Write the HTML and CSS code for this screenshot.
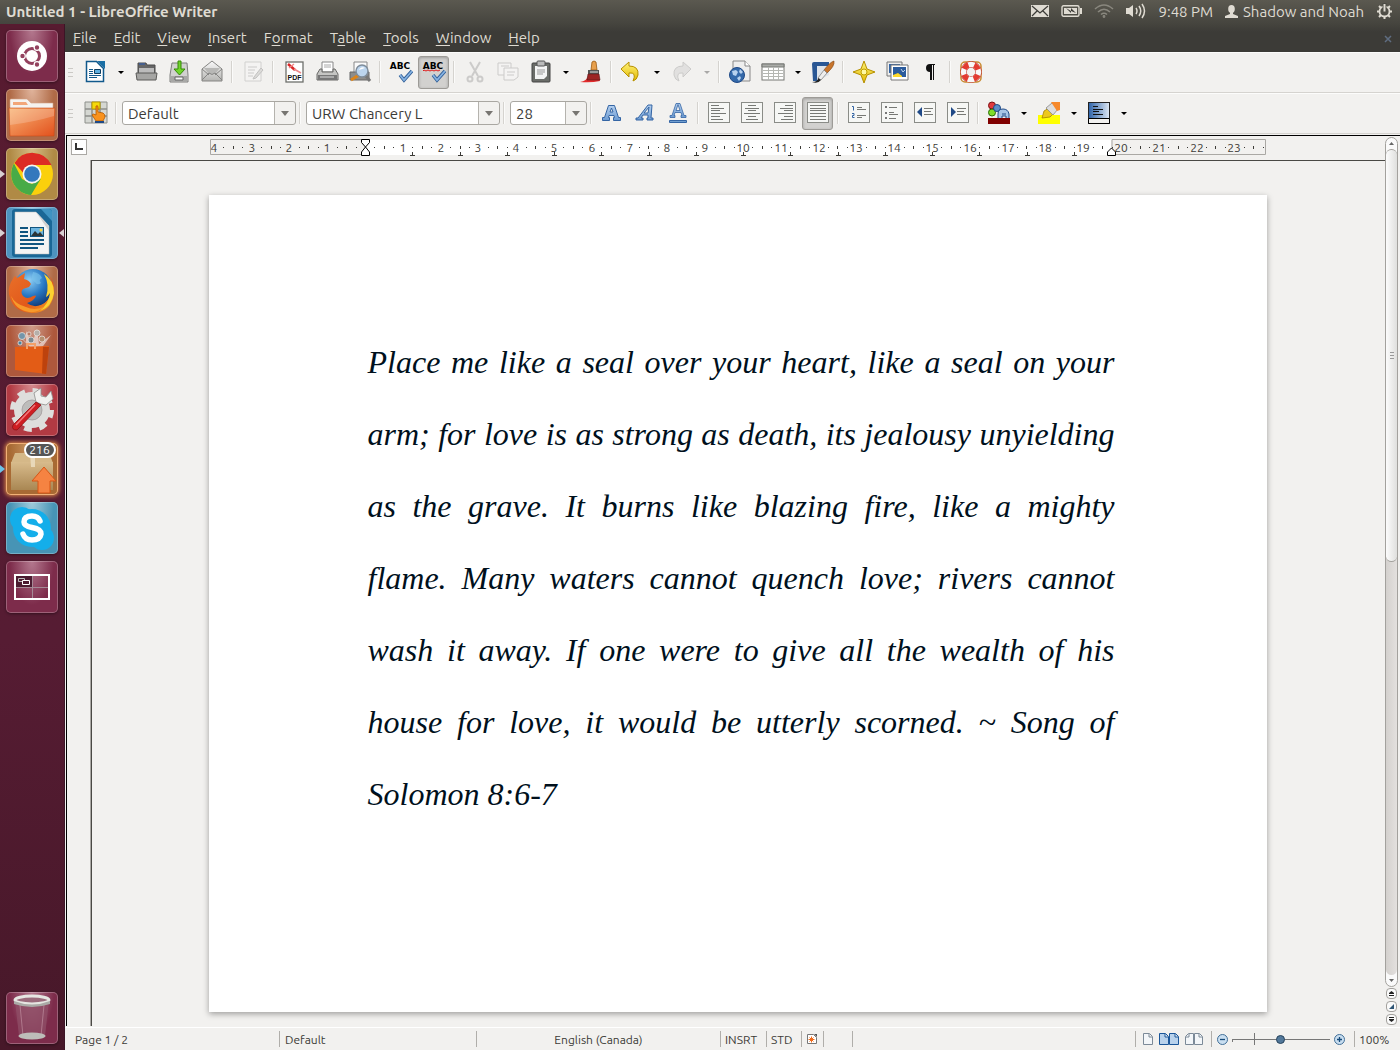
FILE: index.html
```
<!DOCTYPE html>
<html lang="en">
<head>
    <meta charset="UTF-8">
    <meta name="viewport" content="width=device-width, initial-scale=1.0">
    <title>Untitled 1 - LibreOffice Writer</title>
    <link rel="stylesheet" href="styles.css">
</head>
<body>
    <!-- shared gradients -->
    <svg class="defs" width="0" height="0" aria-hidden="true">
        <defs>
            <linearGradient id="blue" x1="0" y1="0" x2="0" y2="1"><stop offset="0" stop-color="#b4cfee"/><stop offset="1" stop-color="#6c9bd2"/></linearGradient>
            <linearGradient id="grey" x1="0" y1="0" x2="0" y2="1"><stop offset="0" stop-color="#fafafa"/><stop offset="1" stop-color="#b5b5b2"/></linearGradient>
            <linearGradient id="yellow" x1="0" y1="0" x2="0" y2="1"><stop offset="0" stop-color="#fff27a"/><stop offset="1" stop-color="#e2b900"/></linearGradient>
            <linearGradient id="orange" x1="0" y1="0" x2="1" y2="1"><stop offset="0" stop-color="#f9b475"/><stop offset="1" stop-color="#e2501c"/></linearGradient>
            <linearGradient id="fox" x1="0" y1="0" x2="1" y2="1"><stop offset="0" stop-color="#e9702a"/><stop offset=".6" stop-color="#e2591a"/><stop offset="1" stop-color="#f7a823"/></linearGradient>
            <linearGradient id="navy" x1="0" y1="0" x2="1" y2="0"><stop offset="0" stop-color="#2d62a8"/><stop offset="1" stop-color="#dfe9f5"/></linearGradient>
            <linearGradient id="box" x1="0" y1="0" x2="0" y2="1"><stop offset="0" stop-color="#d8bb8c"/><stop offset="1" stop-color="#a98753"/></linearGradient>
            <radialGradient id="globe" cx=".4" cy=".3" r=".8"><stop offset="0" stop-color="#8fd0f5"/><stop offset=".5" stop-color="#2878c4"/><stop offset="1" stop-color="#0c2c66"/></radialGradient>
        </defs>
    </svg>

    <header class="panel">
        <h1 class="panel-title">Untitled 1 - LibreOffice Writer</h1>
        <div class="indicators">
            <button class="ind" aria-label="Messages"><svg width="18" height="12" viewBox="0 0 18 12"><rect width="18" height="12" fill="#dfdbd2"/><path d="M1 1l8 7 8-7M1 11l5-5M17 11l-5-5" fill="none" stroke="#3c3b37" stroke-width="1.2"/></svg></button>
            <button class="ind" aria-label="Battery"><svg width="21" height="12" viewBox="0 0 21 12"><rect x="1" y=".8" width="17" height="10.4" rx="1.5" fill="none" stroke="#dfdbd2" stroke-width="1.4"/><rect x="3" y="3" width="13" height="6" fill="#dfdbd2"/><path d="M19 3h2v6h-2z" fill="#dfdbd2"/><path d="M5 3l5 3 0-3 5 5-5-2v2z" fill="#3c3b37"/></svg></button>
            <button class="ind" aria-label="Network"><svg width="20" height="14" viewBox="0 0 20 14" fill="none" stroke="#8a887f" stroke-width="1.6"><path d="M1 5Q10-3 19 5M4 8Q10 2.500 16 8M7 10.500Q10 8 13 10.500"/><circle cx="10" cy="12.500" r=".6"/></svg></button>
            <button class="ind" aria-label="Sound"><svg width="20" height="16" viewBox="0 0 20 16"><path d="M0 5h3l4-3v12l-4-3H0z" fill="#dfdbd2"/><path d="M10 5q2 3 0 6M13 3q3.500 5 0 10M16 1q5 7 0 14" fill="none" stroke="#dfdbd2" stroke-width="1.5"/></svg></button>
            <button class="ind clock">9:48 PM</button>
            <button class="ind user"><svg width="13" height="13" viewBox="0 0 13 13" fill="#dfdbd2"><ellipse cx="6.500" cy="4" rx="3.300" ry="4"/><path d="M5 7h3v2l5 2v2H0v-2l5-2z"/></svg>Shadow and Noah</button>
            <button class="ind" aria-label="Session"><svg width="17" height="17" viewBox="0 0 17 17"><circle cx="8.500" cy="8.500" r="5" fill="none" stroke="#dfdbd2" stroke-width="1.8"/><g stroke="#dfdbd2" stroke-width="2"><path d="M1 8.500h2M14 8.500h2M8.500 14v2M3 3l2 2M14 3l-2 2M3 14l2-2M14 14l-2-2"/></g><path d="M6.500 0h4v8h-4z" fill="#4b4a43"/><path d="M8.500 1v7.500" stroke="#dfdbd2" stroke-width="2"/></svg></button>
        </div>
    </header>

    <div class="desktop">
        <nav class="launcher" aria-label="Launcher">
            <button class="tile plum" aria-label="Dash"><svg viewBox="0 0 52 52"><circle cx="26" cy="26" r="15" fill="#fff"/><circle cx="26" cy="26" r="7.500" fill="none" stroke="#93415e" stroke-width="3"/><g fill="#93415e" stroke="#fff" stroke-width="1.200"><circle cx="16.500" cy="26" r="2.800"/><circle cx="31" cy="17.500" r="2.800"/><circle cx="31" cy="34.500" r="2.800"/></g></svg></button>
            <button class="tile copper" aria-label="Files"><svg viewBox="0 0 52 52"><path d="M4 11q0-1 1-1h16l4 4h22v8H4z" fill="#f5f2ef" stroke="#d4a184" stroke-width=".6"/><path d="M7 13h13l2 3H7z" fill="#f2a679"/><path d="M3 19h46l-1 28H4z" fill="url(#orange)" stroke="#c94a17" stroke-width=".6"/><path d="M4 20h44v7Q28 33 4 36z" fill="#fff" opacity=".2"/></svg></button>
            <button class="tile gold run" aria-label="Chrome"><svg viewBox="0 0 52 52"><circle cx="26" cy="26" r="21" fill="#fbd00c"/><path d="M8 15.500A21 21 0 0 0 25 47L35 30.500 26 36 16 31z" fill="#48ab47"/><path d="M8.500 15A21 21 0 0 1 45.500 17H26q-7 0-9 7.500z" fill="#dc2b24"/><circle cx="26" cy="26" r="9.500" fill="#f5f5f5"/><circle cx="26" cy="26" r="7.800" fill="#3478bd"/></svg></button>
            <button class="tile sky run focus" aria-label="LibreOffice Writer"><svg viewBox="0 0 52 52"><rect x="6" y="2" width="40" height="48" rx="3" fill="#1a6796"/><path d="M35 2h8q3 0 3 3v9z" fill="#3f93c2"/><path d="M9 5h21l13 14v28H9z" fill="#f4f4f4" stroke="#bbb" stroke-width=".5"/><path d="M30 5l13 14v5z" fill="#d0d0d0"/><path d="M14 21h8M14 25h8M14 29h8M14 33h24M14 37h24M14 41h18" stroke="#115580" stroke-width="2"/><rect x="24.500" y="20.500" width="13" height="9" fill="#6db5e0" stroke="#115580"/><path d="M25 29l4-5 3 3 2-2 3.500 4z" fill="#2c3436"/><circle cx="35" cy="23" r="1.500" fill="#ffd23c"/></svg></button>
            <button class="tile copper" aria-label="Firefox"><svg viewBox="0 0 52 52"><circle cx="27" cy="22" r="19" fill="url(#globe)"/><path d="M27 6q7 1 9 6-4 2-1 5-4 3-6-1-5-2-2-10z" fill="#7cc4ec" opacity=".6"/><path d="M5 16l3-5 1-1 2 2 8-5-1 6q5 1 7 5l-2 3-6 2q-3 3 0 7 4 4 10 0 3-1 3 0-2 5-9 7 6 5 14 2 9-4 10-14 3-11-3-17 7 7 6 20-3 19-22 19Q8 46 4 32q-3-8 1-16z" fill="url(#fox)"/><path d="M38 8q10 6 10 19-2 14-14 18 9-8 10-18-2 3-4 4 4-12-2-23z" fill="#fbd131"/><path d="M5 30q4 14 18 16 9 1 15-5-10 4-18 0-11-3-15-11z" fill="#f79a2b"/></svg></button>
            <button class="tile rust" aria-label="Software Center"><svg viewBox="0 0 52 52"><path d="M26 24L10 8l10 9 0-11 6 13 5-15 2 15 12-9-10 14z" fill="#fff" opacity=".55"/><g stroke="#e7e0db" stroke-width=".8"><circle cx="16" cy="11" r="3.500" fill="#7395aa"/><circle cx="31" cy="8" r="3" fill="#b5b0aa"/><circle cx="36" cy="14" r="3" fill="#b58f70"/><circle cx="25" cy="15" r="3" fill="#7b8a90"/><circle cx="14" cy="18" r="2" fill="#4684a0"/><circle cx="23" cy="9" r="2" fill="#b97c65"/></g><path d="M9 22l34-1-3 28-31-4z" fill="#e35c16"/><path d="M37 22h6l-3 27-4-.500z" fill="#bd420d"/><path d="M21 24v-5h8v5" fill="none" stroke="#f3a067" stroke-width="2"/></svg></button>
            <button class="tile red" aria-label="System Settings"><svg viewBox="0 0 52 52"><circle cx="26" cy="26" r="19" fill="none" stroke="#dededc" stroke-width="6" stroke-dasharray="7.500 7.420"/><circle cx="26" cy="26" r="14" fill="none" stroke="#dededc" stroke-width="8"/><circle cx="26" cy="26" r="10" fill="#bdbdbb" stroke="#aaa"/><path d="M30 18l-2-9 7-5 0 8 5 1 5-6 2 8-7 6-5-1z" fill="#f0f0ee" stroke="#8e8e8c" stroke-width=".8"/><path d="M30 18L7 41q-2 5 4 5L35 21z" fill="#cf1e22" stroke="#8b1014" stroke-width=".8"/><path d="M29 21L10 41" stroke="#f0787a" stroke-width="1.500"/></svg></button>
            <button class="tile amber run update" aria-label="Update Manager"><svg viewBox="0 0 52 52"><path d="M9 10h34l4 10H5z" fill="#d5b888"/><path d="M5 19h42v28H5z" fill="url(#box)"/><path d="M24 10h5v14h-4z" fill="#e8d8b9"/><path d="M32 50V38h-6l12-14 12 14h-6v12z" fill="#f58342" stroke="#d75515"/></svg><span class="badge">216</span></button>
            <button class="tile cyan" aria-label="Skype"><svg viewBox="0 0 52 52"><g fill="#14aeea"><circle cx="26" cy="26" r="19"/><circle cx="16" cy="17" r="12"/><circle cx="36" cy="36" r="12"/></g><path d="M34 19q-2-5-8-5-8 0-8 6 0 4 8 5.500 9 1.500 9 6.500-1 6-9 6-7 0-9-6" fill="none" stroke="#fff" stroke-width="5.500" stroke-linecap="round"/></svg></button>
            <button class="tile plum" aria-label="Workspaces"><svg viewBox="0 0 52 52"><path d="M26.500 14v24M9 26.500h34" stroke="#a58a96"/><rect x="9" y="14" width="34" height="24" fill="none" stroke="#fff" stroke-width="2"/><path d="M10 15h16v11H10z" fill="#4c1c31"/><path d="M12.500 17.500h6v3h-6z" fill="none" stroke="#bbb"/><path d="M16.500 19.500h7v4h-7z" fill="#4c1c31" stroke="#fff"/></svg></button>
            <button class="tile plum trash" aria-label="Trash"><svg viewBox="0 0 52 52"><path d="M9 9l4 35q13 6 26 0l4-35z" fill="#8f4f67" opacity=".75"/><path d="M14 13l3 31M38 13l-3 31" stroke="#d2a7b5" opacity=".5"/><ellipse cx="26" cy="44" rx="13.500" ry="3.500" fill="#bdbdb9"/><ellipse cx="26" cy="8" rx="17" ry="4" fill="#9b6b7c" stroke="#e6e6e2" stroke-width="3"/><path d="M8 9q18 7 36 0v3q-18 6-36 0z" fill="#aaaaa6"/></svg></button>
        </nav>

        <main class="window">
            <nav class="menubar" aria-label="Menu">
                <button><u>F</u>ile</button>
                <button><u>E</u>dit</button>
                <button><u>V</u>iew</button>
                <button><u>I</u>nsert</button>
                <button>F<u>o</u>rmat</button>
                <button>T<u>a</u>ble</button>
                <button><u>T</u>ools</button>
                <button><u>W</u>indow</button>
                <button><u>H</u>elp</button>
                <button class="close-doc" aria-label="Close document"><svg width="8" height="8" viewBox="0 0 8 8"><path d="M1 1l6 6M7 1L1 7" stroke="#5f6d81" stroke-width="1.500"/></svg></button>
            </nav>

            <div class="toolbar" role="toolbar" aria-label="Standard">
                <span class="grip"></span>
                <button class="tool" aria-label="New"><svg viewBox="0 0 24 24"><path d="M2.500 1.500h10l7 7v13h-17z" fill="#fff" stroke="#11598c" stroke-width="1.500"/><path d="M13 1h8v8z" fill="#1a6fa5"/><path d="M5 9.500h4M5 11.500h4M5 13.500h4M5 15.500h12M5 17.500h8" stroke="#11598c"/><path d="M10.500 9.500h6v4h-6z" fill="#5fb0e0" stroke="#0c3c60"/></svg></button>
                <button class="drop" aria-label="New menu"></button>
                <button class="tool" aria-label="Open"><svg viewBox="0 0 24 24"><path d="M4 3h8l1 2h8v9H4z" fill="#666" stroke="#4a4a4a"/><path d="M5 4h6" stroke="#465f8d" stroke-width="2"/><path d="M5 8h15v5H5z" fill="#bbb"/><path d="M2 13h21l-1 7H3z" fill="#a5a5a3" stroke="#5b5b59"/></svg></button>
                <button class="tool" aria-label="Save"><svg viewBox="0 0 24 24"><path d="M5 3h15l1 12v7H3v-7z" fill="#d1d1cf" stroke="#7e7e7c"/><path d="M4 16h16v5H4z" fill="#a8a8a6"/><path d="M8 17h8v3H8z" fill="#f7f7f7" stroke="#666"/><path d="M11 1h3v8h4l-5.500 6L7 9h4z" fill="#70d52c" stroke="#348a05"/></svg></button>
                <button class="tool" aria-label="E-mail"><svg viewBox="0 0 24 24"><path d="M2 9l10-8 10 8v12H2z" fill="url(#grey)" stroke="#858583"/><path d="M4 8h16l-5 6H9z" fill="#b8b8b6"/><path d="M2 20l7-7q3 3 6 0l7 7M2 9l7 6M22 9l-7 6" fill="none" stroke="#858583"/></svg></button>
                <span class="sep"></span>
                <button class="tool off" aria-label="Edit file" disabled><svg viewBox="0 0 24 24"><path d="M4 2h16v19H4z" fill="#fafafa" stroke="#888"/><path d="M7 7h9M7 10h7M7 13h6M7 16h5" stroke="#777"/><path d="M13 17l7-9 2 2-7 8-3 1z" fill="#aaa" stroke="#555"/></svg></button>
                <span class="sep"></span>
                <button class="tool" aria-label="Export as PDF"><svg viewBox="0 0 24 24"><rect x="4" y="2" width="17" height="20" fill="#fff" stroke="#6e706c" stroke-width="1.300"/><path d="M6 4l7 6" stroke="#da2525" stroke-width="2.500"/><path d="M7 8l5-4M12 9l7 4" fill="none" stroke="#e88" stroke-width="1.500"/><text x="12.500" y="20" text-anchor="middle" class="pdf-text">PDF</text></svg></button>
                <button class="tool" aria-label="Print"><svg viewBox="0 0 24 24"><path d="M7 2h11v10H7z" fill="#fff" stroke="#888"/><path d="M9 5h7M9 7h7" stroke="#aaa"/><path d="M5 9h2v3h11V9h2l3 5v6H2v-6z" fill="#c5c5c3" stroke="#686866"/><path d="M3 15h19v5H3z" fill="#777"/><path d="M5 17h14" stroke="#ddd"/></svg></button>
                <button class="tool" aria-label="Page preview"><svg viewBox="0 0 24 24"><path d="M6 2h13v11H6z" fill="#fafafa" stroke="#888"/><path d="M2 12h19v8H2z" fill="#8d8d8b" stroke="#666"/><path d="M3 20l8-5" stroke="#dd8418" stroke-width="3"/><path d="M18 16l4 5" stroke="#777" stroke-width="3"/><circle cx="14" cy="11" r="6" fill="#bcd5ee" stroke="#7f8d9b" stroke-width="1.500"/><path d="M11 10a4 4 0 0 1 6-2z" fill="#fff"/></svg></button>
                <span class="sep"></span>
                <button class="tool" aria-label="Spelling and grammar"><svg viewBox="0 0 24 24"><text x="11" y="9" text-anchor="middle" class="abc-text">ABC</text><path d="M11 15l4 5 8-9" fill="none" stroke="#315f98" stroke-width="3.500"/><path d="M11 15l4 5 8-9" fill="none" stroke="#86b3e2" stroke-width="1.800"/></svg></button>
                <button class="tool pressed" aria-label="Autospellcheck" aria-pressed="true"><svg viewBox="0 0 24 24"><text x="11" y="9" text-anchor="middle" class="abc-text">ABC</text><path d="M1 11l1-1 2 1 2-1 2 1 2-1 2 1 2-1 2 1 2-1" fill="none" stroke="#e01b1b"/><path d="M11 15l4 5 8-9" fill="none" stroke="#315f98" stroke-width="3.500"/><path d="M11 15l4 5 8-9" fill="none" stroke="#86b3e2" stroke-width="1.800"/></svg></button>
                <span class="sep"></span>
                <button class="tool off" aria-label="Cut" disabled><svg viewBox="0 0 24 24" fill="none" stroke="#777" stroke-width="2"><path d="M7 2l8 14M17 2L9 16"/><circle cx="7" cy="19" r="2.500"/><circle cx="17" cy="19" r="2.500"/></svg></button>
                <button class="tool off" aria-label="Copy" disabled><svg viewBox="0 0 24 24" fill="#fafafa" stroke="#777"><path d="M2 3h13v12H2z"/><path d="M8 8h14v9l-4 3H8z"/><path d="M5 6h8M11 12h8M11 15h7"/></svg></button>
                <button class="tool" aria-label="Paste"><svg viewBox="0 0 24 24"><rect x="3" y="3" width="18" height="19" rx="1" fill="#6b6d69" stroke="#444"/><path d="M6 6h12v10l-3 3H6z" fill="#f4f4f4"/><path d="M8 10h8M8 12h8M8 14h6" stroke="#999"/><rect x="8" y="1" width="8" height="5" rx="1" fill="#bbb" stroke="#555"/></svg></button>
                <button class="drop" aria-label="Paste menu"></button>
                <button class="tool" aria-label="Clone formatting"><svg viewBox="0 0 24 24"><path d="M1 22q7-1 8-6h10l2 5q-9 2-20 1z" fill="#e22b2b"/><path d="M13 2q2-2 4 0l1 8h-6z" fill="#e8a04c" stroke="#9a5b12" stroke-width=".8"/><path d="M9 10h11v4H9z" fill="#555"/><path d="M9 14h11l1 6H8z" fill="#9c2424" stroke="#571717" stroke-width=".6"/><path d="M11 12h8" stroke="#ddd"/></svg></button>
                <span class="sep"></span>
                <button class="tool" aria-label="Undo"><svg viewBox="0 0 24 24"><path d="M1 9l8-7v4q10 0 9 9-1 5-5 6 4-9-4-8v4z" fill="url(#yellow)" stroke="#b69000"/></svg></button>
                <button class="drop" aria-label="Undo menu"></button>
                <button class="tool off" aria-label="Redo" disabled><svg viewBox="0 0 24 24"><path d="M21 9l-8-7v4Q3 6 4 15q1 5 5 6-4-9 4-8v4z" fill="#bbb" stroke="#777"/></svg></button>
                <button class="drop off" aria-label="Redo menu" disabled></button>
                <span class="sep"></span>
                <button class="tool" aria-label="Hyperlink"><svg viewBox="0 0 24 24"><path d="M5 1h12l5 5v15H5z" fill="#eee" stroke="#888"/><path d="M17 1v5h5" fill="#fff" stroke="#888"/><circle cx="9" cy="15" r="7.500" fill="#3469aa" stroke="#204a87"/><path d="M4 11l4-1 2 2-2 4-3-1zM12 9l3 3-2 2-2-2zM9 18l3-2 1 2-2 3z" fill="#b7d1ee"/></svg></button>
                <button class="tool" aria-label="Table"><svg viewBox="0 0 24 24"><rect x="1" y="4" width="22" height="16" fill="#fff" stroke="#777975"/><path d="M1 4h22v3H1z" fill="#aaaca8" stroke="#777975"/><path d="M2 10.500h20M2 13.500h20M2 16.500h20M7.500 7v13M12.500 7v13M17.500 7v13" stroke="#b5b7b2"/></svg></button>
                <button class="drop" aria-label="Table menu"></button>
                <button class="tool" aria-label="Show draw functions"><svg viewBox="0 0 24 24"><path d="M1 4q0-2 2-2h15v4L8 17v4H2z" fill="#2a5794"/><path d="M6 6h12v9L8 20H6z" fill="#dfe4ea"/><path d="M23 1q1 5-7 12l-3-3q6-8 10-9z" fill="#c8752c" stroke="#80410e" stroke-width=".6"/><path d="M13 10l3 3-6 7-3-2z" fill="#eee" stroke="#777" stroke-width=".7"/><path d="M1 22q6 0 6-4l3 2q-3 4-9 2z" fill="#222"/></svg></button>
                <span class="sep"></span>
                <button class="tool" aria-label="Navigator"><svg viewBox="0 0 24 24"><path d="M12 1l3 8 8 3-8 3-3 8-3-8-8-3 8-3z" fill="url(#yellow)" stroke="#b69000"/><circle cx="12" cy="12" r="3" fill="#fff8a5" stroke="#c0a000"/></svg></button>
                <button class="tool" aria-label="Gallery"><svg viewBox="0 0 24 24"><path d="M2 2h15v14H2z" fill="#eee" stroke="#777"/><path d="M4 4h11v9H4z" fill="#3465a4"/><path d="M6 5h17v15H6z" fill="#fff" stroke="#777"/><path d="M8 7h13v10H8z" fill="#2b5b9c"/><path d="M8 15l5-2 4 3v1H8z" fill="#ffd92a"/><path d="M16 9l2 3 2-2" fill="none" stroke="#bcd1eb"/></svg></button>
                <button class="tool" aria-label="Nonprinting characters"><svg viewBox="0 0 24 24"><path d="M17 4h-5q-4 0-4 4t4 4v8h2V5h1v15h1V5h1z" fill="#111"/></svg></button>
                <span class="sep"></span>
                <button class="tool" aria-label="Help"><svg viewBox="0 0 24 24"><rect x="2" y="2" width="20" height="20" rx="4" fill="none" stroke="#c98b31" stroke-width="1.500"/><circle cx="12" cy="12" r="7.500" fill="none" stroke="#bb2a20" stroke-width="6.500"/><circle cx="12" cy="12" r="7.500" fill="none" stroke="#f8f8f8" stroke-width="5.500"/><circle cx="12" cy="12" r="7.500" fill="none" stroke="#e33b31" stroke-width="5.500" stroke-dasharray="5.900 5.900" stroke-dashoffset="-3"/></svg></button>
            </div>

            <div class="toolbar" role="toolbar" aria-label="Formatting">
                <span class="grip"></span>
                <button class="tool" aria-label="Styles and formatting"><svg viewBox="0 0 24 24"><path d="M1 1h22v21H1z" fill="#d5d7d2" stroke="#8d8f8a"/><path d="M1 8h22M1 15h22M8 1v21M16 1v21" stroke="#8d8f8a" stroke-width="1.500"/><path d="M8 1h8v7H8z" fill="#f5d90a" stroke="#b89b00"/><path d="M12 5q2-1 2 1v5l5 1q2 1 2 4l-2 4h-7l-4-6q1-2 4 0z" fill="#f9921e" stroke="#b25800" stroke-width=".8"/><path d="M11 20h9v2h-9z" fill="#204a87"/></svg></button>
                <span class="sep"></span>
                <div class="combo style-combo"><select aria-label="Paragraph style"><option>Default</option></select></div>
                <span class="sep"></span>
                <div class="combo font-combo"><select aria-label="Font name"><option>URW Chancery L</option></select></div>
                <span class="sep"></span>
                <div class="combo size-combo"><select aria-label="Font size"><option>28</option></select></div>
                <span class="sep"></span>
                <button class="tool" aria-label="Bold"><svg viewBox="0 0 24 24"><path d="M2.500 19.500v-3h2l4-12h6l4 12h2v3h-7v-3h1l-.5-2H9l-.5 2h1v3zM10 11h3l-1.500-4z" fill="url(#blue)" stroke="#3465a4" fill-rule="evenodd"/></svg></button>
                <button class="tool" aria-label="Italic"><svg viewBox="0 0 24 24"><path d="M3 19v-2h2L15 4h4l-1 13h2v2h-6v-2h1v-3H10l-2 3h2v2zM11 12h4l1-6z" fill="url(#blue)" stroke="#3465a4" fill-rule="evenodd"/></svg></button>
                <button class="tool" aria-label="Underline"><svg viewBox="0 0 24 24"><path d="M4 16.500v-2h2l4-12h4l4 12h2v2h-5v-2h1l-1-3H9l-1 3h1v2zM10 9.500h4l-2-6z" fill="url(#blue)" stroke="#3465a4" stroke-width=".8" fill-rule="evenodd"/><path d="M3.500 19.500h17v2h-17z" fill="#729fcf" stroke="#3465a4"/></svg></button>
                <span class="sep"></span>
                <button class="tool" aria-label="Align left"><svg viewBox="0 0 24 24"><rect class="sheet" x="1.500" y="1.500" width="21" height="20"/><path class="lines" d="M4 4.500h8M4 7.500h13M4 9.500h9M4 12.500h15M4 15.500h9M4 18.500h12"/></svg></button>
                <button class="tool" aria-label="Centre"><svg viewBox="0 0 24 24"><rect class="sheet" x="1.500" y="1.500" width="21" height="20"/><path class="lines" d="M8 4.500h8M5 7.500h14M8 9.500h8M4 12.500h16M8 15.500h8M6 18.500h12"/></svg></button>
                <button class="tool" aria-label="Align right"><svg viewBox="0 0 24 24"><rect class="sheet" x="1.500" y="1.500" width="21" height="20"/><path class="lines" d="M12 4.500h8M7 7.500h13M11 9.500h9M5 12.500h15M11 15.500h9M8 18.500h12"/></svg></button>
                <button class="tool pressed" aria-label="Justified" aria-pressed="true"><svg viewBox="0 0 24 24"><rect class="sheet" x="1.500" y="1.500" width="21" height="20"/><path class="lines" d="M4 4.500h16M4 7.500h16M4 9.500h16M4 12.500h16M4 15.500h16M4 18.500h16"/></svg></button>
                <span class="sep"></span>
                <button class="tool" aria-label="Numbering"><svg viewBox="0 0 24 24"><rect class="sheet" x="1.500" y="1.500" width="21" height="20"/><path class="lines" d="M10 6.500h5M10 8.500h9M10 14.500h9M10 16.500h5"/><path d="M5 5.500h1.500v4M5 12.500h2v2h-1.500v2h2" fill="none" stroke="#3465a4"/></svg></button>
                <button class="tool" aria-label="Bullets"><svg viewBox="0 0 24 24"><rect class="sheet" x="1.500" y="1.500" width="21" height="20"/><path class="lines" d="M9 6.500h8M9 11.500h5M9 13.500h9M9 17.500h7"/><path d="M5 5h2v2H5zM5 11h2v2H5zM5 16h2v2H5z" fill="#777"/></svg></button>
                <button class="tool" aria-label="Decrease indent"><svg viewBox="0 0 24 24"><rect class="sheet" x="1.500" y="1.500" width="21" height="20"/><path class="lines" d="M11 7.500h9M11 10.500h7M11 13.500h9"/><path d="M9 6v10l-5-5z" fill="#204a87"/></svg></button>
                <button class="tool" aria-label="Increase indent"><svg viewBox="0 0 24 24"><rect class="sheet" x="1.500" y="1.500" width="21" height="20"/><path class="lines" d="M11 7.500h9M11 10.500h7M11 13.500h9"/><path d="M5 6v10l5-5z" fill="#204a87"/></svg></button>
                <span class="sep"></span>
                <button class="tool" aria-label="Font colour"><svg viewBox="0 0 24 24"><circle cx="5" cy="4.500" r="3.500" fill="#e03a3e" stroke="#7c1013"/><circle cx="5" cy="11.500" r="3.500" fill="#7fdc2a" stroke="#2b6c08"/><circle cx="10" cy="7" r="3.500" fill="#5c8fc8" stroke="#204a87"/><path d="M11 18v-5q0-5 5-5t6 5v5h-3v-3h-4v3z" fill="#a7c4e6" stroke="#204a87"/><path d="M15 13h4" stroke="#204a87"/><path d="M1 17h22v6H1z" fill="#800000"/></svg></button>
                <button class="drop" aria-label="Font colour menu"></button>
                <button class="tool" aria-label="Highlighting"><svg viewBox="0 0 24 24"><path d="M1 14h22v9H1z" fill="#ff0"/><path d="M5 17l2-7 5-3 5 5-4 4z" fill="#edc81b" stroke="#a78100" stroke-width=".8"/><path d="M9 7l6-5 6 6-5 6z" fill="#ddd" stroke="#888" stroke-width=".8"/><path d="M14 1h9v8l-3 1z" fill="#f6892c"/></svg></button>
                <button class="drop" aria-label="Highlighting menu"></button>
                <button class="tool" aria-label="Background colour"><svg viewBox="0 0 24 24"><rect x="1.500" y="1.500" width="21" height="21" fill="url(#navy)" stroke="#222"/><path d="M6 5.500h5M6 8.500h10M6 10.500h6M6 13.500h10" stroke="#111"/><path d="M1.500 17.500h21v5h-21z" fill="#f2f1ef" stroke="#000"/></svg></button>
                <button class="drop" aria-label="Background colour menu"></button>
            </div>

            <div class="workspace">
                <div class="editor">
                    <button class="corner" aria-label="Tab type"><svg width="8" height="8" viewBox="0 0 8 8"><path d="M1 0v6h7" fill="none" stroke="#333" stroke-width="2"/></svg></button>
                    <div class="ruler-strip">
                        <svg class="ruler" id="ruler" width="1058" height="20" viewBox="0 0 1058 20">
                            <rect x="156" y="1" width="746" height="15" fill="#fff"/>
                            <path d="M156 .500H1.500v15H156M903 .500h153.500v15H903z" fill="none" stroke="#aaa8a4"/>
                        </svg>
                    </div>
                    <div class="side-ruler"></div>
                    <div class="canvas">
                        <article class="page">
                            <p class="verse">
                                <span>Place me like a seal over your heart, like a seal on your</span>
                                <span>arm; for love is as strong as death, its jealousy unyielding</span>
                                <span>as the grave. It burns like blazing fire, like a mighty</span>
                                <span>flame. Many waters cannot quench love; rivers cannot</span>
                                <span>wash it away. If one were to give all the wealth of his</span>
                                <span>house for love, it would be utterly scorned. ~ Song of</span>
                                <span class="last">Solomon 8:6-7</span>
                            </p>
                        </article>
                    </div>
                </div>
                <div class="scroll">
                    <div class="scrollbar">
                        <button class="step" aria-label="Scroll up"><svg width="5" height="3" viewBox="0 0 5 3"><path d="M0 3l2.500-3L5 3z" fill="#666"/></svg></button>
                        <div class="trough"><div class="thumb"><i></i></div></div>
                        <button class="step" aria-label="Scroll down"><svg width="5" height="3" viewBox="0 0 5 3"><path d="M0 0h5L2.500 3z" fill="#666"/></svg></button>
                    </div>
                    <button class="mini" aria-label="Previous page"><svg width="5" height="5" viewBox="0 0 5 5"><path d="M0 2l2.500-2L5 2v1H0zM0 4h5v1H0z" fill="#222"/></svg></button>
                    <button class="mini" aria-label="Navigation"><svg width="5" height="5" viewBox="0 0 5 5"><path d="M0 5L5 0v5z" fill="#2f5575"/></svg></button>
                    <button class="mini" aria-label="Next page"><svg width="5" height="5" viewBox="0 0 5 5"><path d="M0 3l2.500 2L5 3V2H0zM0 0h5v1H0z" fill="#222"/></svg></button>
                </div>
            </div>

            <footer class="status">
                <span class="cell page-no">Page 1 / 2</span>
                <span class="cell page-style">Default</span>
                <span class="cell lang">English (Canada)</span>
                <span class="cell insert">INSRT</span>
                <span class="cell select-mode">STD</span>
                <span class="cell modified"><svg width="12" height="12" viewBox="0 0 12 12"><path d="M1.500 1.500h6l3 3v6h-9z" fill="#fff" stroke="#777"/><path d="M8 1h3v3z" fill="#555"/><path d="M5.500 3.500v6M2.500 6.500h6M3.500 4.500l4 4M7.500 4.500l-4 4" stroke="#f06a1a"/></svg></span>
                <span class="cell signature"></span>
                <span class="cell rest"></span>
                <span class="cell views">
                    <button aria-label="Single page"><svg width="10" height="12" viewBox="0 0 10 12"><path d="M.500.500h6l3 3v8h-9zM6 1v3h3" fill="#f3f6f9" stroke="#7c8a98"/></svg></button>
                    <button aria-label="Multiple pages"><svg width="20" height="12" viewBox="0 0 20 12"><path d="M.500.500h6l3 3v8h-9zM6 1v3h3M10.500.500h6l3 3v8h-9zM16 1v3h3" fill="#b9d2ec" stroke="#1b5699"/></svg></button>
                    <button aria-label="Book view"><svg width="18" height="12" viewBox="0 0 18 12"><path d="M3.500.500h5v11h-8v-8zM9.500.500h5l3 3v8h-8z" fill="#f3f6f9" stroke="#7c8a98"/><path d="M4 1v3H1M14 1v3h3" fill="none" stroke="#7c8a98"/></svg></button>
                </span>
                <span class="cell zoom">
                    <button aria-label="Zoom out"><svg width="11" height="11" viewBox="0 0 11 11"><circle cx="5.500" cy="5.500" r="5" fill="#c9def0" stroke="#426f97"/><path d="M3 5.500h5" stroke="#164a7a" stroke-width="1.300"/></svg></button>
                    <input type="range" min="0" max="100" value="49" aria-label="Zoom">
                    <button aria-label="Zoom in"><svg width="11" height="11" viewBox="0 0 11 11"><circle cx="5.500" cy="5.500" r="5" fill="#c9def0" stroke="#426f97"/><path d="M3 5.500h5M5.500 3v5" stroke="#164a7a" stroke-width="1.300"/></svg></button>
                </span>
                <span class="cell percent">100%</span>
            </footer>
        </main>
    </div>

    <script>
        // Horizontal ruler in centimetres
        const ruler = document.getElementById('ruler');
        const zero = 156;
        const end = 902;
        const cm = 37.8;

        function add(name, attrs, text) {
            const el = document.createElementNS('http://www.w3.org/2000/svg', name);
            Object.entries(attrs).forEach(([key, value]) => el.setAttribute(key, value));
            if(text) {
                el.textContent = text;
            }
            ruler.appendChild(el);
        }

        for(let n = -4; n <= 23; n++) {
            const x = zero + n * cm;
            if(n !== 0) {
                add('text', { x: Math.round(x), y: 13, class: 'ruler-num' }, String(Math.abs(n)));
            }
            add('rect', { x: Math.round(x + cm / 4), y: 8, width: 1, height: 1, class: 'tick' });
            add('rect', { x: Math.round(x + cm / 2), y: 7, width: 1, height: 3, class: 'tick' });
            add('rect', { x: Math.round(x + cm * 3 / 4), y: 8, width: 1, height: 1, class: 'tick' });
        }

        // Default tab stops, 1.25 cm apart
        for(let x = zero + cm * 1.25; x < end - 10; x += cm * 1.25) {
            const left = Math.round(x);
            add('path', { d: `M${left - 2} 16.5h5M${left + .5} 13v3`, class: 'tab-stop' });
        }

        add('path', { d: 'M152.5 .5h8v3l-4 4.5-4-4.500zM152.500 16.500h8v-3.500l-4-5-4 5z', class: 'marker' });
        add('path', { d: 'M898.5 16.500h8v-3.500l-4-4-4 4z', class: 'marker' });
    </script>
</body>
</html>
```

FILE: styles.css
```
* {
    box-sizing: border-box;
}

body {
    margin: 0;
    height: 100vh;
    display: flex;
    flex-direction: column;
    font-family: Ubuntu, 'Noto Sans', 'Open Sans', sans-serif;
    font-size: 15px;
    color: #3c3b37;
    background: #f2f1ef;
    overflow: hidden;
}

button {
    border: none;
    background: none;
    padding: 0;
    font: inherit;
    color: inherit;
    display: flex;
    align-items: center;
    justify-content: center;
}

.defs {
    position: absolute;
}

/* top panel */
.panel {
    height: 24px;
    flex: none;
    display: flex;
    align-items: center;
    justify-content: space-between;
    padding: 0 7px 2px 6px;
    background: linear-gradient(#5b5950, #45443e);
    color: #dfdbd2;
}

.panel-title {
    margin: 0;
    font-size: 15px;
    font-weight: 700;
}

.indicators {
    display: flex;
    align-items: center;
    gap: 12px;
}

.user {
    gap: 5px;
}

.desktop {
    flex: 1;
    min-height: 0;
    display: flex;
}

/* launcher */
.launcher {
    width: 65px;
    flex: none;
    display: flex;
    flex-direction: column;
    align-items: center;
    gap: 7px;
    padding: 6px 1px 6px 0;
    background: linear-gradient(#571b30, #561c33 60%, #471829);
    border-right: 1px solid #3c1526;
}

.tile {
    position: relative;
    width: 52px;
    height: 52px;
    flex: none;
    border-radius: 5px;
    box-shadow: inset 0 0 0 1px rgba(255, 255, 255, 0.25), 0 1px 3px rgba(0, 0, 0, 0.4);
}

.tile svg {
    width: 52px;
    height: 52px;
}

.plum {
    background: radial-gradient(ellipse at 50% 0, #b4798f, #7d2c4b 60%);
}

.copper {
    background: radial-gradient(ellipse at 50% 0, #e0b49c, #b06b47 60%);
}

.gold {
    background: radial-gradient(ellipse at 50% 0, #d5bd85, #b08a45 60%);
}

.sky {
    background: radial-gradient(ellipse at 50% 0, #8fc3e0, #4d93bf 60%);
}

.rust {
    background: radial-gradient(ellipse at 50% 0, #cf9c8a, #ae583c 60%);
}

.red {
    background: radial-gradient(ellipse at 50% 0, #d58a8e, #b23a43 60%);
}

.amber {
    background: radial-gradient(ellipse at 50% 0, #cc9a66, #a86a34 60%);
    box-shadow: 0 0 4px 1px #e08c48, inset 0 0 0 1px #f2b177;
}

.cyan {
    background: radial-gradient(ellipse at 50% 0, #a0cbdc, #4794b5 60%);
}

.trash {
    margin-top: auto;
}

.run::before,
.focus::after {
    content: '';
    position: absolute;
    top: 22px;
    border: 4px solid transparent;
}

.run::before {
    left: -6px;
    border-left: 5px solid #d8d0d3;
    border-right: none;
}

.update::before {
    border-left-color: #6cc3e8;
}

.focus::after {
    right: -6px;
    border-right: 5px solid #d8d0d3;
    border-left: none;
}

.badge {
    position: absolute;
    top: -1px;
    right: 2px;
    width: 32px;
    height: 16px;
    border: 2px solid #fff;
    border-radius: 8px;
    background: #555;
    color: #fff;
    font-size: 12px;
    line-height: 12px;
    text-align: center;
}

/* window */
.window {
    flex: 1;
    min-width: 0;
    display: flex;
    flex-direction: column;
}

.menubar {
    height: 28px;
    flex: none;
    display: flex;
    align-items: center;
    gap: 17px;
    padding: 0 8px 2px;
    background: linear-gradient(#45443e, #3c3b37 8px);
    color: #dfdbd2;
}

.menubar button {
    display: block;
}

.menubar u {
    text-underline-offset: 2px;
}

.menubar .close-doc {
    margin-left: auto;
}

.toolbar {
    height: 41px;
    flex: none;
    display: flex;
    align-items: center;
    background: #f2f1ef;
    border-bottom: 1px solid #d5d3cf;
    box-shadow: inset 0 1px 0 #fcfcfb;
}

.grip {
    width: 5px;
    height: 9px;
    margin: 0 6px 0 3px;
    background: repeating-linear-gradient(#cbc9c5 0 1px, transparent 1px 4px);
}

.tool {
    width: 33px;
    height: 33px;
    flex: none;
}

.tool svg {
    width: 24px;
    height: 24px;
}

.tool.pressed {
    width: 31px;
    margin: 0 1px;
    border: 1px solid #9d9b97;
    border-radius: 3px;
    background: #d2d1cf;
    box-shadow: inset 0 1px 3px rgba(0, 0, 0, 0.25);
}

.off svg,
.drop.off {
    opacity: 0.3;
}

.drop {
    width: 17px;
    height: 33px;
    flex: none;
}

.drop::before {
    content: '';
    border: 3px solid transparent;
    border-top-color: #000;
    border-bottom: none;
}

.sep {
    width: 2px;
    height: 22px;
    margin: 0 3px;
    flex: none;
    border-left: 1px solid #d5d3cf;
    border-right: 1px solid #fbfbfa;
}

.pdf-text {
    font: 700 7px 'Liberation Sans', sans-serif;
    fill: #111;
}

.abc-text {
    font: 700 9px 'DejaVu Sans', sans-serif;
    fill: #000;
}

.sheet {
    fill: #f6f7f5;
    stroke: #8a8c87;
}

.lines {
    fill: none;
    stroke: #777975;
}

.combo {
    position: relative;
    height: 24px;
    margin-left: 2px;
    flex: none;
}

.combo select {
    appearance: none;
    width: 100%;
    height: 24px;
    padding: 0 26px 0 5px;
    border: 1px solid #a9a7a2;
    border-radius: 3px;
    background: linear-gradient(90deg, #b5b3ae 1px, #f2f1ef 1px) right / 21px 100% no-repeat #fff;
    font: inherit;
    color: #3c3b37;
}

.combo::after {
    content: '';
    position: absolute;
    right: 7px;
    top: 10px;
    border: 4px solid transparent;
    border-top: 5px solid #777571;
    border-bottom: none;
    pointer-events: none;
}

.style-combo {
    width: 174px;
}

.font-combo {
    width: 194px;
}

.size-combo {
    width: 77px;
}

/* editing area */
.workspace {
    flex: 1;
    min-height: 0;
    display: flex;
    padding: 1px 0 0 1px;
    background: #f2f1ef;
    border-bottom: 1px solid #f2f1ef;
}

.editor {
    flex: 1;
    min-width: 0;
    display: grid;
    grid-template-columns: 24px 1fr;
    grid-template-rows: 24px 1fr;
    border-top: 1px solid #000;
    border-left: 1px solid #000;
}

.corner {
    width: 16px;
    height: 16px;
    margin: 3px 4px;
    background: #fff;
    border: 1px solid #aaa8a4;
}

.ruler-strip {
    padding-top: 3px;
    display: flex;
    justify-content: center;
    overflow: hidden;
}

.ruler {
    flex: none;
}

.ruler-num {
    font-size: 12px;
    fill: #3c3b37;
    text-anchor: middle;
}

.tick {
    fill: #3c3b37;
}

.tab-stop {
    fill: none;
    stroke: #3c3b37;
}

.marker {
    fill: #fff;
    stroke: #000;
}

.side-ruler {
    border-right: 1px solid #aaa8a4;
}

.canvas {
    min-width: 0;
    overflow: hidden;
    padding: 34px 2px 0 0;
    border-top: 1px solid #4a4945;
    border-left: 1px solid #4a4945;
}

.page {
    max-width: 1058px;
    min-height: 817px;
    margin: 0 auto;
    padding: 131px 152px 0 159px;
    background: #fff;
    box-shadow: 0 2px 6px rgba(0, 0, 0, 0.35);
}

.verse {
    margin: 0;
    font-family: 'URW Chancery L', 'Z003', 'Liberation Serif', serif;
    font-size: 32px;
    font-style: italic;
    line-height: 72px;
    color: #00101c;
}

.verse span {
    display: block;
    text-align-last: justify;
}

.verse .last {
    text-align-last: left;
}

.scroll {
    width: 15px;
    flex: none;
    display: flex;
    flex-direction: column;
    border-top: 1px solid #000;
    padding: 1px 2px 0 0;
}

.scrollbar {
    flex: 1;
    display: flex;
    flex-direction: column;
    border: 1px solid #a3a19d;
    border-radius: 7px;
    background: #fafafa;
}

.step {
    height: 11px;
}

.trough {
    flex: 1;
    background: linear-gradient(90deg, #d4d1ce, #e3e0de);
    border-radius: 6px;
}

.thumb {
    height: 50%;
    display: flex;
    align-items: center;
    justify-content: center;
    border: 1px solid #a3a19d;
    border-width: 1px 0;
    border-radius: 6px;
    background: linear-gradient(90deg, #fcfcfc, #dfdfdd);
}

.thumb i {
    width: 4px;
    height: 7px;
    background: repeating-linear-gradient(#999 0 1px, transparent 1px 3px);
}

.mini {
    width: 11px;
    height: 11px;
    margin: 1px;
    border: 1px solid #a3a19d;
    border-radius: 4px;
    background: #fafafa;
}

/* status bar */
.status {
    height: 23px;
    flex: none;
    display: flex;
    align-items: center;
    padding-left: 10px;
    border-top: 1px solid #fff;
    font-size: 12px;
}

.cell {
    height: 16px;
    display: flex;
    align-items: center;
    flex: none;
    padding-left: 5px;
    border-left: 1px solid #b0aeaa;
}

.page-no {
    width: 204px;
    padding-left: 0;
    border-left: none;
}

.page-style {
    width: 197px;
}

.lang {
    width: 244px;
    padding-left: 0;
    justify-content: center;
}

.insert {
    width: 46px;
    padding-left: 4px;
}

.select-mode {
    width: 35px;
    padding-left: 4px;
}

.modified {
    width: 22px;
    padding-left: 4px;
}

.signature {
    width: 29px;
}

.rest {
    flex: 1;
}

.views {
    width: 76px;
    gap: 6px;
    padding-left: 7px;
}

.zoom {
    width: 143px;
    gap: 4px;
}

.zoom input {
    appearance: none;
    width: 98px;
    height: 12px;
    margin: 0;
    background:
        linear-gradient(#777, #777) 0 6px / 100% 1px no-repeat,
        linear-gradient(#777, #777) 0 6px / 1px 3px no-repeat,
        linear-gradient(#777, #777) 22px 0 / 1px 12px no-repeat;
}

.zoom input::-webkit-slider-thumb {
    appearance: none;
    width: 9px;
    height: 9px;
    margin-top: 1px;
    border: 1px solid #27435c;
    border-radius: 50%;
    background: #52789a;
}

.percent {
    width: 46px;
    padding-left: 4px;
}
```
